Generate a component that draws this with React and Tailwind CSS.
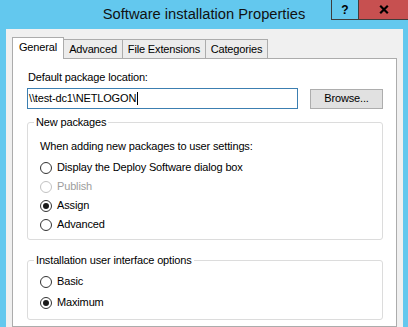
import React from "react";

function Radio({ checked, disabled, label }) {
  return (
    <div className="flex items-center h-[19px]">
      <div
        className={
          "w-[12px] h-[12px] rounded-full border bg-white flex items-center justify-center " +
          (disabled ? "border-[#c2c2c2]" : "border-[#333333]")
        }
      >
        {checked && <div className="w-[6px] h-[6px] rounded-full bg-[#1a1a1a]" />}
      </div>
      <span className={"ml-[5px] leading-[13px] " + (disabled ? "text-[#9d9d9d]" : "text-black")}>
        {label}
      </span>
    </div>
  );
}

export default function App() {
  return (
    <div className="w-[408px] h-[327px] overflow-hidden bg-[#63c8ee] flex flex-col font-['Liberation_Sans',Arial,sans-serif] text-[11px] tracking-[-0.15px] text-black">
      <div className="h-[29px] shrink-0 relative">
        <div className="w-full text-center text-[14.7px] leading-[28px] tracking-normal text-[#111]">
          Software installation Properties
        </div>
        <div className="absolute top-0 right-0 flex h-[20px]">
          <div className="w-[28px] h-[20px] border-l border-b border-r border-[#3d3d3d] bg-[#63c8ee] flex items-center justify-center text-[12px] font-bold leading-none tracking-normal">
            ?
          </div>
          <div className="w-[49px] h-[20px] border-b border-[#3d3d3d] bg-[#c75050] flex items-center justify-center">
            <svg width="10" height="9" viewBox="0 0 10 9">
              <path d="M1.2 0.8 L8.8 8.2 M8.8 0.8 L1.2 8.2" stroke="#000" strokeWidth="2.2" fill="none" />
            </svg>
          </div>
        </div>
      </div>
      <div className="flex-1 ml-[6px] mr-[5px] bg-[#f0f0f0] pt-[8px] px-[6px] flex flex-col">
        <div className="flex items-end h-[21px] shrink-0">
          <div className="h-[22px] w-[52px] -mb-px relative z-10 bg-white border border-b-0 border-[#acacac] flex justify-center pt-[3px] leading-[13px]">
            General
          </div>
          <div className="h-[19px] w-[59px] bg-[#ececec] border-t border-r border-[#acacac] flex items-center justify-center leading-[13px]">
            Advanced
          </div>
          <div className="h-[19px] w-[83px] bg-[#ececec] border-t border-r border-[#acacac] flex items-center justify-center leading-[13px]">
            File Extensions
          </div>
          <div className="h-[19px] w-[62px] bg-[#ececec] border-t border-r border-[#acacac] flex items-center justify-center leading-[13px]">
            Categories
          </div>
        </div>
        <div className="flex-1 bg-white border border-[#acacac] pl-[14px] pr-[13px]">
          <div className="mt-[12px] ml-px h-[13px] leading-[13px]">Default package location:</div>
          <div className="mt-[4px] flex items-center justify-between h-[21px]">
            <div className="w-[271px] h-[21px] border border-[#3c7fb1] bg-white flex items-center pl-[1px] leading-[13px]">
              <span>\\test-dc1\NETLOGON</span>
              <span className="inline-block w-px h-[13px] bg-black ml-[1px]" />
            </div>
            <div className="w-[73px] h-[20px] border border-[#adadad] bg-[#e1e1e1] flex items-center justify-center leading-[13px]">
              Browse...
            </div>
          </div>
          <fieldset className="mt-[7px] border border-[#dcdcdc] rounded-[3px] p-0 m-0">
            <legend className="ml-[6px] px-[2px] leading-[13px]">New packages</legend>
            <div className="pl-[12px] pt-[11px] pb-[5px]">
              <div className="leading-[13px] h-[13px]">When adding new packages to user settings:</div>
              <div className="mt-[5px]">
                <Radio label="Display the Deploy Software dialog box" />
                <Radio label="Publish" disabled />
                <Radio label="Assign" checked />
                <Radio label="Advanced" />
              </div>
            </div>
          </fieldset>
          <fieldset className="mt-[14px] border border-[#dcdcdc] rounded-[3px] p-0 m-0">
            <legend className="ml-[6px] px-[2px] leading-[13px]">Installation user interface options</legend>
            <div className="pl-[12px] pt-[5px] pb-[7px] flex flex-col gap-[2px]">
              <Radio label="Basic" />
              <Radio label="Maximum" checked />
            </div>
          </fieldset>
        </div>
      </div>
    </div>
  );
}
